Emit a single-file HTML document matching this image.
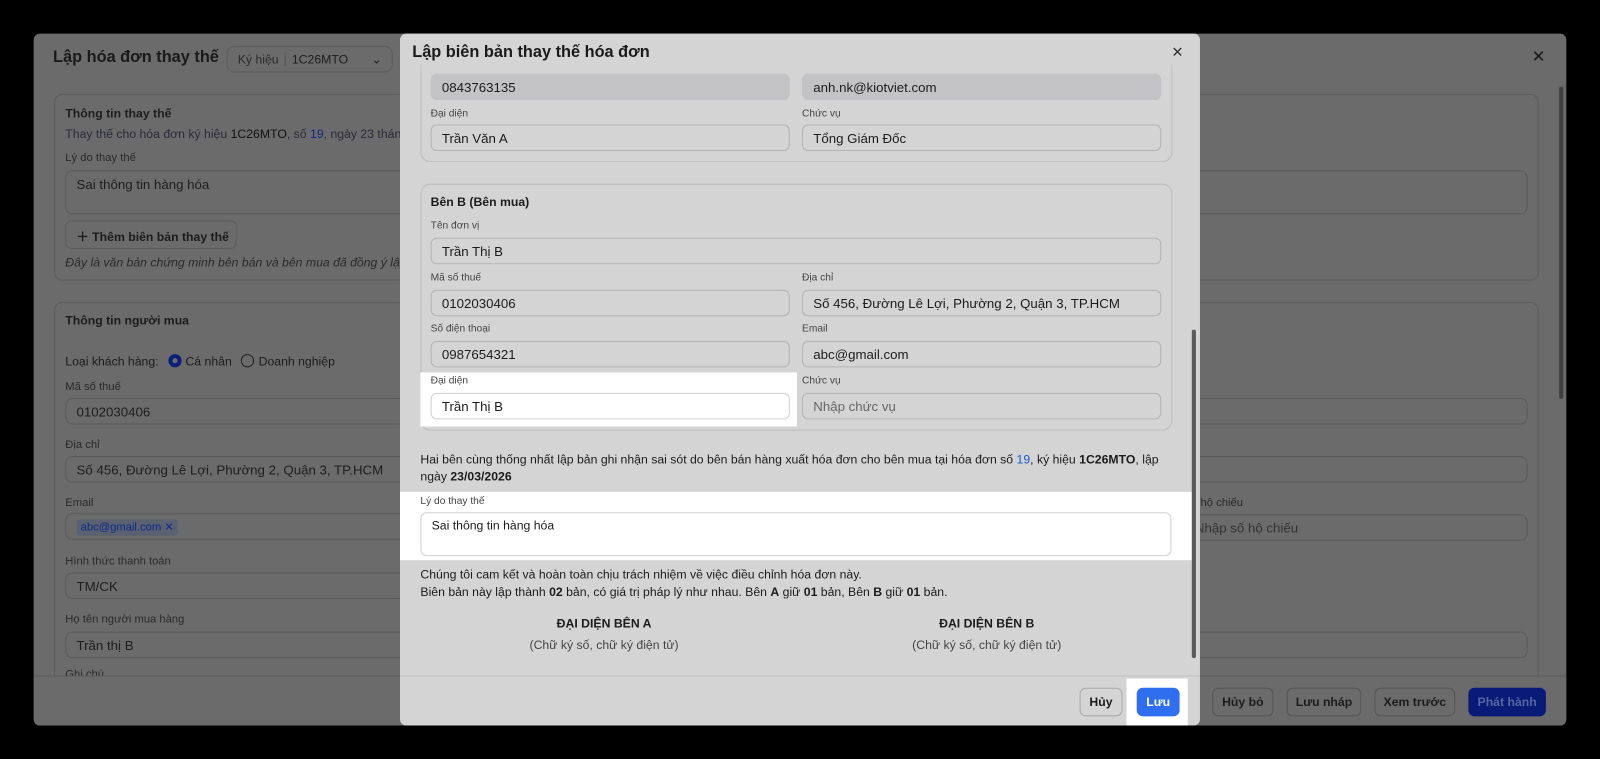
<!DOCTYPE html>
<html><head><meta charset="utf-8"><style>
*{box-sizing:border-box;margin:0;padding:0}
html,body{width:1600px;height:759px;background:#000;overflow:hidden}
body{font-family:"Liberation Sans",sans-serif;position:relative;color:#1c1c1c}
#wrap{position:absolute;left:0;top:0;width:1568px;height:744px;transform:scale(1.0204);transform-origin:0 0}
.a{position:absolute;white-space:nowrap}
.outer{left:33px;top:33px;width:1502px;height:678px;background:#6b6b6b;border-radius:6px;overflow:hidden}
.ob{border:1px solid #5c5c5c;border-radius:8px}
.oi{position:absolute;border:1px solid #5a5a5a;border-radius:7px;height:26px;font-size:13px;padding:5px 10px;color:#1e1e1e;white-space:nowrap}
.ol{position:absolute;font-size:11px;color:#2a2a2a;white-space:nowrap}
.modal{left:392px;top:33px;width:784px;height:678px;background:#d4d4d4;border-radius:6px;overflow:hidden}
.mi{position:absolute;border:1px solid #b3b3b3;border-radius:6px;height:26px;font-size:13px;padding:5px 10px;color:#1c1c1c;background:#d4d4d4;white-space:nowrap}
.ml{position:absolute;font-size:10px;color:#444}
.w{background:#fff}
.btn{position:absolute;border:1px solid #555;border-radius:6px;font-size:12px;font-weight:bold;text-align:center;line-height:26px;height:28px;color:#1c1c1c;white-space:nowrap}
</style></head><body><div id="wrap">
<div class="a outer">
 <div class="a" style="left:19px;top:15px;font-size:16px;font-weight:bold;color:#1a1a1a">Lập hóa đơn thay thế</div>
 <div class="a ob" style="left:189px;top:12px;width:163px;height:26px;font-size:12px;padding:5px 10px;color:#1e1e1e"><span style="color:#2c2c2c">Ký hiệu</span><span style="border-left:1px solid #555;margin-left:6px;padding-left:6px">1C26MTO</span><span style="float:right">⌄</span></div>
 <div class="a" style="left:1468px;top:13px;font-size:16px;color:#1a1a1a">✕</div>
 <div class="a" style="left:1495px;top:52px;width:4px;height:306px;background:#3e3e3e;border-radius:2px"></div>
 <div class="a ob" style="left:20px;top:59px;width:1455px;height:183px"></div>
 <div class="a" style="left:31px;top:71px;font-size:12px;font-weight:bold;color:#1e1e1e">Thông tin thay thế</div>
 <div class="a" style="left:31px;top:91px;font-size:12px;color:#2a2a3a">Thay thế cho hóa đơn ký hiệu <span style="color:#111">1C26MTO</span>, số <span style="color:#0a2a8a">19</span>, ngày 23 tháng</div>
 <div class="ol" style="left:31px;top:116px">Lý do thay thế</div>
 <div class="oi" style="left:31px;top:134px;width:1433px;height:43px">Sai thông tin hàng hóa</div>
 <div class="a ob" style="left:31px;top:183px;width:168px;height:28px;font-size:12px;font-weight:bold;padding:6px 10px;border-radius:6px">＋ Thêm biên bản thay thế</div>
 <div class="a" style="left:31px;top:217px;font-size:12px;font-style:italic;color:#2a2a2a">Đây là văn bản chứng minh bên bán và bên mua đã đồng ý lập</div>
 <div class="a ob" style="left:20px;top:263px;width:1455px;height:440px"></div>
 <div class="a" style="left:31px;top:274px;font-size:12px;font-weight:bold">Thông tin người mua</div>
 <div class="a" style="left:31px;top:314px;font-size:12px">Loại khách hàng: <span style="display:inline-block;width:13px;height:13px;border:4px solid #0a1f7a;border-radius:50%;vertical-align:-2px;margin:0 4px 0 6px"></span>Cá nhân <span style="display:inline-block;width:13px;height:13px;border:1px solid #222;border-radius:50%;vertical-align:-2px;margin:0 4px 0 6px"></span>Doanh nghiệp</div>
 <div class="ol" style="left:31px;top:340px">Mã số thuế</div>
 <div class="oi" style="left:31px;top:357px;width:400px">0102030406</div>
 <div class="ol" style="left:31px;top:397px">Địa chỉ</div>
 <div class="oi" style="left:31px;top:414px;width:400px">Số 456, Đường Lê Lợi, Phường 2, Quận 3, TP.HCM</div>
 <div class="ol" style="left:31px;top:454px">Email</div>
 <div class="oi" style="left:31px;top:470px;width:400px;padding:4px 10px"><span style="background:#5a6170;color:#0a2a8a;font-size:11px;padding:2px 4px;border-radius:3px">abc@gmail.com ✕</span></div>
 <div class="ol" style="left:31px;top:511px">Hình thức thanh toán</div>
 <div class="oi" style="left:31px;top:528px;width:400px">TM/CK</div>
 <div class="ol" style="left:31px;top:568px">Họ tên người mua hàng</div>
 <div class="oi" style="left:31px;top:586px;width:400px">Trần thị B</div>
 <div class="ol" style="left:31px;top:622px">Ghi chú</div>
 <div class="oi" style="left:1127px;top:357px;width:337px"></div>
 <div class="oi" style="left:1127px;top:414px;width:337px"></div>
 <div class="ol" style="left:1127px;top:454px">Số hộ chiếu</div>
 <div class="oi" style="left:1127px;top:471px;width:337px;color:#333">Nhập số hộ chiếu</div>
 <div class="oi" style="left:1127px;top:586px;width:337px"></div>
 <div class="a" style="left:0;top:629px;width:1502px;height:49px;background:#6b6b6b;border-top:1px solid #5a5a5a"></div>
 <div class="btn" style="left:1155px;top:641px;width:60px">Hủy bỏ</div>
 <div class="btn" style="left:1228px;top:641px;width:73px">Lưu nháp</div>
 <div class="btn" style="left:1314px;top:641px;width:79px">Xem trước</div>
 <div class="btn" style="left:1406px;top:641px;width:76px;background:#0a1a78;border-color:#0a1a78;color:#5566a0">Phát hành</div>
</div>

<div class="a modal">
 <div class="a" style="left:12px;top:10px;font-size:16px;font-weight:bold;color:#1a1a1a">Lập biên bản thay thế hóa đơn</div>
 <div class="a" style="left:756px;top:10px;font-size:14px;color:#333">✕</div>
 <div class="a" style="left:20px;top:30px;width:737px;height:96px;border:1px solid #bcbcbc;border-top:none;border-radius:0 0 10px 10px"></div>
 <div class="mi" style="left:30px;top:39px;width:352px;background:#c3c3c5;border-color:#c3c3c5">0843763135</div>
 <div class="mi" style="left:394px;top:39px;width:352px;background:#c3c3c5;border-color:#c3c3c5">anh.nk@kiotviet.com</div>
 <div class="ml" style="left:30px;top:73px">Đại diện</div>
 <div class="mi" style="left:30px;top:89px;width:352px">Trần Văn A</div>
 <div class="ml" style="left:394px;top:73px">Chức vụ</div>
 <div class="mi" style="left:394px;top:89px;width:352px">Tổng Giám Đốc</div>

 <div class="a" style="left:20px;top:147px;width:737px;height:242px;border:1px solid #bcbcbc;border-radius:10px"></div>
 <div class="a" style="left:30px;top:158px;font-size:12px;font-weight:bold">Bên B (Bên mua)</div>
 <div class="ml" style="left:30px;top:183px">Tên đơn vị</div>
 <div class="mi" style="left:30px;top:200px;width:716px">Trần Thị B</div>
 <div class="ml" style="left:30px;top:234px">Mã số thuế</div>
 <div class="mi" style="left:30px;top:251px;width:352px">0102030406</div>
 <div class="ml" style="left:394px;top:234px">Địa chỉ</div>
 <div class="mi" style="left:394px;top:251px;width:352px">Số 456, Đường Lê Lợi, Phường 2, Quận 3, TP.HCM</div>
 <div class="ml" style="left:30px;top:284px">Số điện thoại</div>
 <div class="mi" style="left:30px;top:301px;width:352px">0987654321</div>
 <div class="ml" style="left:394px;top:284px">Email</div>
 <div class="mi" style="left:394px;top:301px;width:352px">abc@gmail.com</div>
 <div class="a w" style="left:20px;top:332px;width:369px;height:53px"></div>
 <div class="ml" style="left:30px;top:335px">Đại diện</div>
 <div class="mi" style="left:30px;top:352px;width:352px;background:#fff;border-color:#d0d0d0">Trần Thị B</div>
 <div class="ml" style="left:394px;top:335px">Chức vụ</div>
 <div class="mi" style="left:394px;top:352px;width:352px;color:#666">Nhập chức vụ</div>

 <div class="a" style="left:20px;top:409px;width:740px;font-size:12px;line-height:17px;white-space:normal">Hai bên cùng thống nhất lập bản ghi nhận sai sót do bên bán hàng xuất hóa đơn cho bên mua tại hóa đơn số <span style="color:#1a5ad8">19</span>, ký hiệu <b>1C26MTO</b>, lập ngày <b>23/03/2026</b></div>
 <div class="a w" style="left:0;top:449px;width:776px;height:67px"></div>
 <div class="ml" style="left:20px;top:453px">Lý do thay thế</div>
 <div class="mi" style="left:20px;top:469px;width:736px;height:43px;background:#fff;border-color:#d0d0d0;font-size:12px">Sai thông tin hàng hóa</div>
 <div class="a" style="left:20px;top:522px;font-size:12px;line-height:17px">Chúng tôi cam kết và hoàn toàn chịu trách nhiệm về việc điều chỉnh hóa đơn này.<br>Biên bản này lập thành <b>02</b> bản, có giá trị pháp lý như nhau. Bên <b>A</b> giữ <b>01</b> bản, Bên <b>B</b> giữ <b>01</b> bản.</div>
 <div class="a" style="left:100px;top:571px;width:200px;text-align:center;font-size:12px;font-weight:bold">ĐẠI DIỆN BÊN A</div>
 <div class="a" style="left:100px;top:592px;width:200px;text-align:center;font-size:12px;color:#444">(Chữ ký số, chữ ký điện tử)</div>
 <div class="a" style="left:475px;top:571px;width:200px;text-align:center;font-size:12px;font-weight:bold">ĐẠI DIỆN BÊN B</div>
 <div class="a" style="left:475px;top:592px;width:200px;text-align:center;font-size:12px;color:#444">(Chữ ký số, chữ ký điện tử)</div>
 <div class="a" style="left:776px;top:290px;width:4px;height:322px;background:#5a5a5a;border-radius:2px"></div>
 <div class="a" style="left:0;top:629px;width:784px;height:49px;border-top:1px solid #c0c0c0"></div>
 <div class="a w" style="left:712px;top:632px;width:60px;height:46px"></div>
 <div class="btn" style="left:666px;top:641px;width:42px;border-color:#aaa">Hủy</div>
 <div class="btn" style="left:722px;top:641px;width:42px;background:#2f6fef;border-color:#2f6fef;color:#fff">Lưu</div>
</div>
</div></body></html>
